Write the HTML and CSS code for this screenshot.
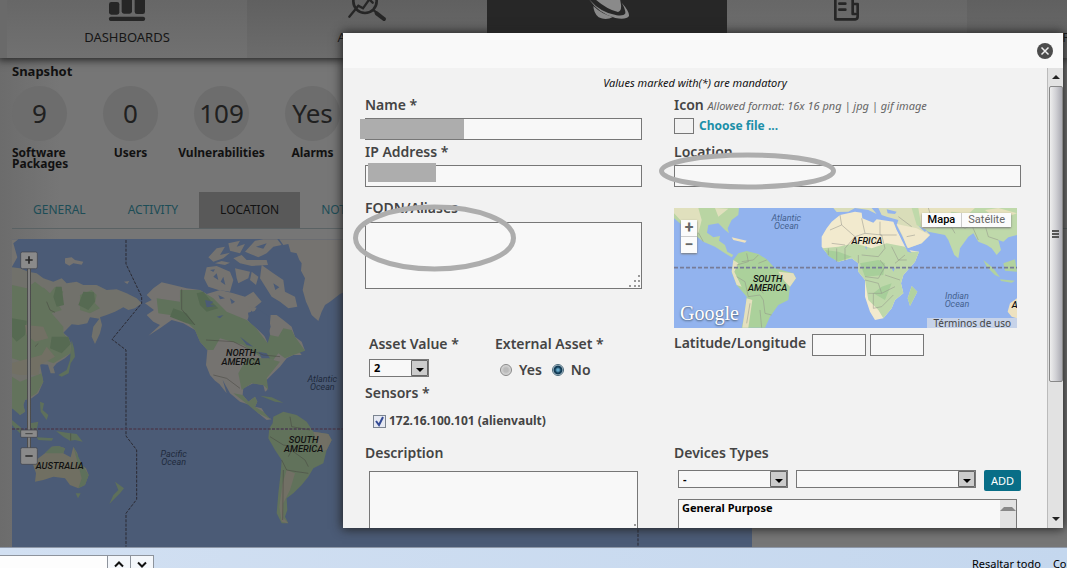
FILE: index.html
```html
<!DOCTYPE html>
<html lang="en">
<head>
<meta charset="utf-8">
<title>Asset detail</title>
<link rel="stylesheet" href="styles.css">
</head>
<body>
<div class="app">
  <nav class="nav">
    <a class="nav-item" href="#dashboards">
      <svg class="nav-icon" viewBox="321 0 120 63"><rect x="327" y="6" width="31" height="38" rx="7"/><rect x="365" y="-30" width="31" height="71" rx="7"/><rect x="404" y="-20" width="31" height="62" rx="7"/><rect x="327" y="50" width="108" height="13" rx="5"/></svg>
      <span>DASHBOARDS</span>
    </a>
    <a class="nav-item nav-item-alt" href="#analysis">
      <svg class="nav-icon" viewBox="21 0 120 63"><g fill="none" stroke="#262626" stroke-linecap="round"><circle cx="75" cy="4" r="35" stroke-width="8"/><path d="M28 50 55 17 69 25 88-2 98 8" stroke-width="7"/><path d="M102 32 111 39" stroke-width="7"/><path d="M110 40 132 57" stroke-width="12"/></g></svg>
      <span>ANALYSIS</span>
    </a>
    <a class="nav-item nav-item-on" href="#environment">
      <svg class="nav-icon" viewBox="741 0 120 63"><path fill="#8a8a8a" d="M752-15H838L843 14Q845 34 834 36 796 28 752-15ZM760 18Q785 42 819 51 798 62 776 52 761 40 760 18Z"/><path fill="#8a8a8a" d="M746-4Q780 38 830 46 851 49 856 40 857 28 845 8 869 35 867 48 859 60 826 54 775 40 746-4Z"/></svg>
      <span>ENVIRONMENT</span>
    </a>
    <a class="nav-item" href="#reports">
      <svg class="nav-icon" viewBox="381 0 120 63"><path fill="none" stroke="#262626" stroke-width="8" d="M406-10V58H466Q473 58 473 49V12H458V-10M458 12V42H466M418 11H436M418 29H436" stroke-linecap="round" stroke-linejoin="round"/></svg>
      <span>REPORTS</span>
    </a>
    <a class="nav-item nav-item-alt" href="#configuration"><span>CONFIGURATION</span></a>
  </nav>
  <main class="asset">
    <h2 class="asset-title">Snapshot</h2>
    <div class="stats">
      <div class="stat"><span class="stat-value">9</span><span class="stat-name stat-name-left">Software<br>Packages</span></div>
      <div class="stat"><span class="stat-value">0</span><span class="stat-name">Users</span></div>
      <div class="stat"><span class="stat-value">109</span><span class="stat-name">Vulnerabilities</span></div>
      <div class="stat"><span class="stat-value">Yes</span><span class="stat-name">Alarms</span></div>
    </div>
    <div class="tabs">
      <a class="tab" href="#general">GENERAL</a>
      <a class="tab" href="#activity">ACTIVITY</a>
      <a class="tab tab-on" href="#location">LOCATION</a>
      <a class="tab" href="#notes">NOTES</a>
    </div>
    <svg class="world" viewBox="0 0 740 309" preserveAspectRatio="xMinYMin slice">
      <defs>
        <linearGradient id="slider" x1="0" x2="1"><stop offset="0" stop-color="#333"/><stop offset=".5" stop-color="#999"/><stop offset="1" stop-color="#333"/></linearGradient>
      </defs>
      <rect width="740" height="309" fill="#4b5b76"/>
      <g transform="translate(-12 -9) scale(.33333)">
        <path fill="#71716b" d="M36 112 60 115 85 125 110 130 130 145 160 155 185 145 200 160 230 155 250 165 290 165 320 180 350 178 380 190 410 205 425 220 405 235 385 240 370 232 345 245 320 255 300 262 306 285 300 310 285 342 275 320 280 290 298 266 270 262 262 280 235 285 215 283 190 308 205 322 215 345 212 370 195 385 170 400 160 412 165 430 152 430 144 404 120 402 125 430 130 455 115 490 95 505 75 510 70 525 75 545 60 555 50 540 36 535Z"/>
        <path fill="#63735c" d="M36 165 80 175 105 155 150 190 165 170 190 185 170 215 185 240 155 250 190 290 190 308 212 340 212 370 160 400 120 385 70 395 36 385ZM240 195 275 180 290 195 285 220 300 235 270 250 240 240ZM36 440 60 455 125 430 130 455 110 490 75 510 70 525 75 545 60 555 36 535ZM130 172 145 185 135 200Z"/>
        <path fill="#566a52" d="M36 265 80 272 75 315 50 335 36 320ZM168 170 185 170 192 225 170 230 160 200ZM250 185 282 187 285 215 265 240 235 225ZM155 320 205 320 212 342 185 370 150 355Z"/>
        <path fill="#727064" d="M75 285 130 290 145 325 105 335 80 315ZM50 395 125 375 140 350 165 380 120 405 115 435 60 435 36 430V400Z"/>
        <g fill="#757370">
          <path d="M195 85 215 82 225 90 250 95 245 104 220 100 208 107 195 100ZM372 155 388 153 382 162ZM40 40 55 28H36V110L52 82Z"/>
          <path d="M838 28 850 45 865 42 872 66 890 70 898 90 905 100 903 122 915 145 908 180 918 215 925 230 935 255 955 273 965 245 975 225 990 215 1020 192 1060 175V28Z"/>
          <path d="M440 195 460 175 485 157 520 165 560 175 600 180 620 192 660 180 700 190 735 200 760 185 785 215 755 240 742 270 765 290 790 310 803 340 812 325 808 300 812 255 830 255 850 270 875 290 885 320 905 335 915 362 890 355 905 375 880 375 860 385 840 410 820 430 800 450 802 480 795 485 790 465 760 460 730 475 728 495 745 515 765 500 772 515 765 530 785 535 800 560 815 568 800 570 775 550 750 525 720 515 690 490 668 450 680 490 658 462 645 452 630 435 618 405 622 360 600 335 585 300 550 280 515 270 480 295 445 317 480 285 460 275 440 255 462 240 435 220 455 210Z"/>
          <path d="M625 82 650 55 675 50 660 75 690 68 670 85 640 95ZM620 112 650 108 690 125 700 150 690 185 655 180 625 170 612 145ZM645 100 665 93 690 98 675 105ZM685 40 720 32 710 50 735 42 720 70 690 62ZM700 85 725 75 740 90 800 90 804 105 755 108 720 100ZM735 65 765 32 790 28H832L845 45 820 50 800 70 775 82ZM785 105 820 130 850 150 855 185 885 200 892 230 865 235 840 215 815 200 780 145ZM705 115 750 125 745 145 715 160 710 145ZM755 125 775 140 768 165 750 150ZM745 230 770 233 760 250Z"/>
          <path fill="#60725b" d="M540 180 600 180 640 205 680 245 740 270 765 290 803 340 810 315 835 320 850 295 875 300 885 320 915 362 880 375 855 385 835 370 820 390 780 380 730 345 660 325 640 360 622 360 600 335 585 300 560 275 510 255 475 250 470 205 540 215Z"/>
          <path fill="#546951" d="M590 190 610 185 635 215 655 235 620 245 600 225ZM520 235 560 250 585 285 560 280 510 260Z"/>
          <path fill="#62725c" d="M740 385 800 385 840 395 800 445 805 480 790 465 755 460 725 480 715 430ZM700 490 728 495 745 515 765 500 772 515 765 530 790 545 812 568 775 550 745 525Z"/>
        </g>
        <path fill="#4b5b76" d="M744 248 778 240 805 258 812 290 800 325 775 300 748 275ZM615 210 640 215 630 225 648 228 620 232ZM650 260 670 255 660 265ZM720 320 760 350 740 345ZM775 365 800 370 810 385 785 385ZM650 130 655 150 640 140ZM670 140 676 165 662 155ZM630 120 645 118 640 126ZM820 160 838 172 826 180ZM768 50 800 40 790 56ZM655 195 675 205 660 208ZM690 205 705 215 695 222Z"/>
        <path fill="#61725b" d="M820 560 850 545 890 555 920 575 940 605 985 612 995 630 980 660 970 700 940 715 925 740 905 765 880 790 860 805 862 840 855 860 865 880 845 880 830 850 835 790 842 730 845 690 825 660 805 625 808 595 818 580Z"/>
        <path fill="#727065" d="M940 605 985 612 995 630 980 660 960 665ZM860 720 885 730 870 780 850 820 850 865 865 880 845 875 838 830 848 760Z"/>
        <path fill="#706f62" d="M98 700 115 685 135 670 155 650 175 648 195 655 190 670 212 682 220 650 232 670 238 700 258 715 266 735 255 765 235 775 210 765 195 745 160 740 130 750 105 755 108 730Z"/>
        <path fill="#5e705b" d="M135 670 155 650 175 648 195 655 190 670 165 670ZM220 650 235 680 250 710 266 735 255 765 235 775 245 745 235 705ZM227 790 242 790 234 805ZM345 755 372 775 360 790 328 822 340 795 355 780ZM168 603 200 608 230 612 248 635 225 630 210 632 190 620ZM90 580 115 575 110 600 95 600ZM36 570 65 595 80 615 60 610 36 585ZM110 622 160 625 155 632 115 630ZM120 515 132 520 128 540 145 555 140 570 122 545ZM215 330 222 355 225 380 212 400 206 430 185 440 175 435 200 420 210 390ZM780 497 815 502 850 518 825 515Z"/>
        <g fill="none" stroke="#45453f" stroke-width="1.5"><path d="M545 178V238L585 285M618 330 700 335 740 355 790 375 840 380M640 435 680 445 720 475M845 690 860 720 890 725 925 730M865 680 880 650 850 645 810 620M880 665 915 690 925 710M850 720 848 870M105 350 115 340M140 215 150 240 165 247M870 560 875 590 930 600M212 610V632"/></g>
        <g fill="none" stroke="#2b2a32" stroke-width="3" stroke-dasharray="9 4"><path d="M378 30V102L425 200V220L336 328 378 360V618L410 660V808L378 850V950"/><path d="M36 597H2230" stroke="#4a3c50" stroke-width="4"/><path d="M1914 600V960"/></g>
        <g class="continent"><text x="723" y="379">NORTH</text><text x="723" y="406">AMERICA</text><text x="911" y="640">SOUTH</text><text x="911" y="667">AMERICA</text><text x="179" y="718">AUSTRALIA</text></g>
        <g class="ocean"><text x="967" y="456">Atlantic</text><text x="967" y="480">Ocean</text><text x="521" y="682">Pacific</text><text x="521" y="705">Ocean</text></g>
        <rect x="81" y="110" width="12" height="545" fill="url(#slider)"/>
        <g fill="#8a8a8a" stroke="#3e4148" stroke-width="2"><rect x="62" y="66" width="50" height="50" rx="5"/><rect x="62" y="600" width="50" height="22" rx="3"/><rect x="62" y="653" width="50" height="50" rx="5"/></g>
        <path stroke="#282828" stroke-width="5" d="M76 90H98M87 79V101M76 678H98"/><path stroke="#444" stroke-width="3" d="M76 611H98"/>
      </g>
    </svg>
  </main>
</div>

<footer class="findbar">
  <input class="find-text" type="text" aria-label="Find in page">
  <button class="find-step" type="button" aria-label="Previous"><svg viewBox="0 0 12 8"><path d="M2 6.500 6 2.500 10 6.500"/></svg></button>
  <button class="find-step" type="button" aria-label="Next"><svg viewBox="0 0 12 8"><path d="M2 2.500 6 6.500 10 2.500"/></svg></button>
  <span class="find-options"><button type="button">Resaltar todo</button><button type="button">Coincidir</button></span>
</footer>

<section class="dialog" role="dialog" aria-label="Edit asset">
  <header class="dialog-head">
    <button class="close" type="button" aria-label="Close"><svg viewBox="0 0 16 16"><circle cx="8" cy="8" r="8" fill="#4c4c4c"/><path d="M4.500 4.500 11.500 11.500M11.500 4.500 4.500 11.500" stroke="#eee" stroke-width="1.500"/></svg></button>
  </header>
  <div class="dialog-main">
    <form class="form">
      <p class="note">Values marked with(*) are mandatory</p>
      <div class="columns">
        <div class="column">
          <div class="field">
            <label class="label" for="name">Name *</label>
            <input class="box" id="name" type="text">
            <span class="mask mask-name"></span>
          </div>
          <div class="field">
            <label class="label" for="ip">IP Address *</label>
            <input class="box" id="ip" type="text">
            <span class="mask mask-ip"></span>
          </div>
          <div class="field field-aliases">
            <label class="label" for="aliases">FQDN/Aliases</label>
            <div class="area"><textarea class="box box-aliases" id="aliases"></textarea>
              <svg class="grip" viewBox="0 0 12 12"><path d="M10 0h2v2h-2zM6 5h2v2H6zM10 5h2v2h-2zM1 10h2v2H1zM6 10h2v2H6zM10 10h2v2h-2z"/></svg></div>
            <svg class="ring ring-aliases" viewBox="0 0 163 68"><ellipse cx="81.500" cy="34" rx="79" ry="31"/></svg>
          </div>
          <div class="asset-row">
            <div class="field field-value">
              <label class="label" for="value">Asset Value *</label>
              <select class="pick pick-value" id="value"><option>2</option></select>
            </div>
            <fieldset class="field">
              <legend class="label">External Asset *</legend>
              <div class="radios"><input type="radio" name="ext" id="yes"><label for="yes">Yes</label><input type="radio" name="ext" id="no" checked><label for="no">No</label></div>
            </fieldset>
          </div>
          <div class="field field-sensors">
            <span class="label">Sensors *</span>
            <div class="sensor"><input type="checkbox" id="sensor" checked><label for="sensor">172.16.100.101 (alienvault)</label></div>
          </div>
          <div class="field field-bottom">
            <label class="label" for="description">Description</label>
            <div class="area area-description"><textarea class="box box-description" id="description"></textarea>
              <svg class="grip" viewBox="0 0 12 12"><path d="M10 0h2v2h-2zM6 5h2v2H6zM10 5h2v2h-2zM1 10h2v2H1zM6 10h2v2H6zM10 10h2v2h-2z"/></svg></div>
          </div>
        </div>

        <div class="column">
          <div class="field field-icon">
            <span class="label">Icon <em class="hint">Allowed format: 16x 16 png | jpg | gif image</em></span>
            <div class="file"><span class="file-preview"></span><a href="#choose">Choose file ...</a></div>
          </div>
          <div class="field">
            <label class="label" for="location">Location</label>
            <input class="box" id="location" type="text">
            <svg class="ring ring-location" viewBox="0 0 179 38"><ellipse cx="89.500" cy="19" rx="86" ry="16"/></svg>
          </div>
          <div class="minimap">
            <svg class="minimap-art" viewBox="0 0 343 120" preserveAspectRatio="xMinYMin slice">
              <rect width="400" height="120" fill="#92b3ee"/>
              <g transform="translate(-9 -8) scale(.33333)">
                <path fill="#b9d5a3" d="M27 24H222L220 45 200 60 188 85 192 100 180 90 160 70 130 75 126 98 145 112 165 108 162 122 180 135 187 155 205 165 200 172 180 160 150 140 115 125 90 105 62 85 27 55Z"/>
                <path fill="#e0e0bd" d="M27 24H100L110 60 100 100 60 75 27 40ZM150 24 190 26 160 50Z"/>
                <path fill="#abd19b" d="M205 180 220 160 245 153 280 162 305 178 330 205 385 220 393 235 375 260 370 300 340 315 315 350 300 383H230L240 340 245 290 215 255 200 215 208 195Z"/>
                <path fill="#e4e0be" d="M340 215 385 220 393 235 375 260 360 245ZM205 180 220 190 208 215 230 260 215 255 200 215ZM245 295 262 300 250 383H232Z"/>
                <path fill="#f2eace" d="M470 110 485 85 500 65 525 45 570 35 590 38 592 55 625 68 635 58 685 65 695 90 715 125 730 150 762 155 750 185 715 225 708 250 715 280 690 300 680 325 655 355 630 360 615 335 600 290 600 240 580 215 580 190 560 175 520 185 490 165 470 140Z"/>
                <path fill="#bed8aa" d="M472 145 520 140 570 130 620 145 665 130 720 140 730 155 762 155 750 185 715 225 708 250 715 280 690 300 680 325 655 355 640 330 610 300 600 240 580 215 580 190 560 175 520 185 490 165Z"/>
                <path fill="#a7cf9a" d="M480 150 520 155 560 170 520 185 490 168ZM585 190 640 180 660 190 655 225 600 230ZM625 280 650 260 680 250 660 300Z"/>
                <path fill="#d9ddb9" d="M505 24H760L772 80 795 105 770 130 728 145 715 115 695 75 700 60 665 50 650 45 640 24 620 24 635 42 610 30 570 24 550 35 515 36Z"/>
                <path fill="#f0e8cb" d="M695 72 755 85 795 105 770 130 728 145 712 105Z"/>
                <path fill="#bfd9aa" d="M740 24H1056V105L1030 112 1015 125 1000 120 1008 150 995 165 980 145 965 135 940 125 925 100 910 110 885 145 880 175 868 165 850 120 840 105 790 95 755 75Z"/>
                <path fill="#e6e1bd" d="M760 24H930L910 42 860 35 815 85 770 85ZM960 30 1000 24 1056 40 1000 60ZM740 258 757 275 735 318 728 295Z"/>
                <path fill="#b2d29f" d="M740 258 757 275 735 318 728 295ZM955 180 985 205 1005 232 990 225 965 200ZM1015 190 1050 178 1056 215 1020 212ZM1005 238 1050 242 1040 248 1008 243Z"/>
                <path fill="#eee2c0" d="M1056 295 1035 310 1028 335 1040 350 1056 355ZM200 112 245 122 240 128 205 120Z"/>
                <path fill="#92b3ee" d="M692 80 700 90 725 140 740 158 728 155 710 120ZM665 28 695 35 690 42 668 40ZM600 140 606 140 604 150ZM680 205 690 205 685 215ZM760 78 785 90 780 96Z"/>
                <g fill="none" stroke="#908f88" stroke-width="1.500"><path d="M525 45 530 75 495 90M530 75 570 110 600 100 590 55M600 100 650 105M645 65V105H695M650 105 660 145 640 170 590 165M570 110 540 145M540 145 540 183M500 130 540 135M490 145V165M515 145V185M580 165 580 190M600 230 640 235 660 200 645 180M600 240 640 250 650 280 610 280M625 280V325L650 320 685 285M650 280 690 260M660 225 705 240M690 190 720 165M680 140 700 180 725 180M230 185 265 180 280 165M245 160 250 185 215 195M280 190 305 180M215 230 240 245 250 290M250 290 285 285 295 300 300 340 320 345M295 280 270 250M285 330 290 383M255 310 245 370M790 24 800 55 850 65 870 100M850 60 900 85 920 75 940 120M960 75 970 110 1000 120M700 50 740 80M100 98 115 125M725 110 750 105"/></g>
                <path stroke="#777c98" stroke-width="5" stroke-dasharray="12 6" d="M27 203H1200"/>
                <g class="continent"><text x="606" y="132">AFRICA</text><text x="308" y="246">SOUTH</text><text x="308" y="273">AMERICA</text><text x="1049" y="325">A</text></g>
                <g class="ocean"><text x="364" y="63">Atlantic</text><text x="364" y="87">Ocean</text><text x="876" y="298">Indian</text><text x="876" y="322">Ocean</text></g>
              </g>
            </svg>
            <div class="zoomer"><button type="button">+</button><button type="button">−</button></div>
            <div class="kinds"><button class="kind-on" type="button">Mapa</button><button type="button">Satélite</button></div>
            <span class="brand">Google</span>
            <a class="terms" href="#terms">Términos de uso</a>
          </div>
          <div class="coords"><label class="label" for="lat">Latitude/Longitude</label><input class="box box-coord" id="lat" type="text"><input class="box box-coord" type="text" aria-label="Longitude"></div>
          <div class="field field-devices">
            <span class="label">Devices Types</span>
            <div class="device-row">
              <select class="pick pick-kind" aria-label="Device type"><option>-</option></select>
              <select class="pick pick-sub" aria-label="Device subtype"><option></option></select>
              <button class="add" type="button">ADD</button>
            </div>
            <div class="device-list">
              <select class="device-options" size="4" aria-label="Selected devices"><option>General Purpose</option></select>
              <span class="device-scroll"></span>
            </div>
          </div>
        </div>
      </div>
    </form>
    <div class="scroll">
      <span class="arrow arrow-up"></span>
      <span class="thumb"><i></i><i></i><i></i></span>
      <span class="arrow arrow-down"></span>
    </div>
  </div>
</section>
</body>
</html>
```
FILE: styles.css
```css
* { box-sizing: border-box; }
body {
  margin: 0;
  height: 100vh;
  display: flex;
  flex-direction: column;
  overflow: hidden;
  position: relative;
  background: #737373;
  color: #111;
  font-family: "Noto Sans", "Open Sans", sans-serif;
  font-size: 12px;
}
button, input, select, textarea { font: inherit; margin: 0; padding: 0; }
a { text-decoration: none; }

/* page behind the dialog */
.app { flex: 1; min-height: 0; overflow: hidden; }
.nav {
  position: relative;
  display: flex;
  height: 58px;
  padding-left: 7px;
  background: #6a6a6a;
  box-shadow: 0 0 8px 2px #222;
}
.nav-item {
  flex: 0 0 240px;
  display: flex;
  flex-direction: column;
  align-items: center;
  justify-content: flex-end;
  gap: 7px;
  padding-bottom: 12px;
  background: linear-gradient(#676767, #717171);
  color: #161616;
  font-size: 13px;
  line-height: 18px;
}
.nav-item-alt { background: linear-gradient(#606060, #6c6c6c); }
.nav-item-on { background: #272727; }
.nav-icon { width: 40px; height: 21px; fill: #262626; overflow: visible; }
.asset { padding: 5px 0 0 12px; background: linear-gradient(90deg, #6c6c6c, #767676 60px); min-height: 100%; }
.asset-title { margin: 0; font-size: 13px; line-height: 16px; }
.stats { display: flex; gap: 36px; padding-top: 7px; height: 113px; }
.stat { width: 55px; display: flex; flex-direction: column; align-items: center; gap: 6px; }
.stat-value {
  width: 55px;
  height: 55px;
  border-radius: 50%;
  background: #6d6d6d;
  color: #202020;
  font: 26px/54px "Noto Sans", sans-serif;
  text-align: center;
  flex: none;
}
.stat-name { font-size: 12px; font-weight: 700; line-height: 11px; white-space: nowrap; }
.stat-name-left { align-self: flex-start; }
.tabs { display: flex; height: 37px; border-bottom: 1px solid #5a6264; }
.tab { padding: 0 21px; color: #1d4d56; line-height: 36px; }
.tab-on { background: #595959; color: #111; }
.world { display: block; width: 740px; max-width: 100%; height: 309px; margin-top: 10px; }
.continent, .ocean { font-family: Roboto, sans-serif; font-style: italic; text-anchor: middle; }
.continent { font-size: 28px; font-weight: 500; fill: #111; }
.ocean { font-size: 27px; fill: #202a3c; }

/* find bar */
.findbar {
  flex: none;
  display: flex;
  align-items: flex-start;
  height: 21px;
  padding-top: 7px;
  border-top: 1px solid #8e98a8;
  background: linear-gradient(90deg, #d2e0f2, #c4d7ee);
  overflow: hidden;
}
.find-text { width: 108px; height: 22px; flex: none; border: 1px solid #8d939c; border-left: 0; background: #fdfdfd; }
.find-step { width: 23px; height: 18px; flex: none; border: 1px solid #8d939c; border-left: 0; background: #f4f7fb; line-height: 0; }
.find-step svg { width: 12px; height: 8px; fill: none; stroke: #111; stroke-width: 2; }
.find-options { display: flex; gap: 12px; margin-left: auto; width: 95px; }
.find-options button { flex: none; border: 0; background: none; font-size: 11px; line-height: 18px; color: #000; }

/* dialog */
.dialog {
  position: absolute;
  inset: 33px 4px 40px 343px;
  display: flex;
  flex-direction: column;
  background: #f2f2f2;
  box-shadow: 0 0 10px 1px #222;
  color: #444;
}
.dialog-head { display: flex; justify-content: flex-end; align-items: center; height: 35px; flex: none; padding-right: 10px; background: #f9f9f9; }
.close { width: 16px; height: 16px; border: 0; background: none; line-height: 0; }
.close svg { width: 16px; height: 16px; }
.dialog-main { flex: 1; min-height: 0; display: flex; }
.form { flex: 1; min-width: 0; overflow: hidden; padding: 7px 26px 0 22px; }
.note { margin: 0; padding-left: 4px; text-align: center; font-size: 11px; font-style: italic; line-height: 16px; color: #111; }
.columns { display: grid; grid-template-columns: 277fr 347fr; gap: 32px; padding-top: 6px; }
.column { display: flex; flex-direction: column; gap: 4px; min-width: 0; }
.field { position: relative; display: flex; flex-direction: column; gap: 5px; margin: 0; padding: 0; border: 0; min-width: 0; }
.label { display: block; padding: 0; font-size: 14px; font-weight: 600; line-height: 16px; height: 16px; white-space: nowrap; }
.hint { font-size: 11px; font-weight: 400; color: #666; }
.box { display: block; width: 100%; height: 22px; border: 1px solid #777; background: #f8f8f8; resize: none; border-radius: 0; }
.mask { position: absolute; background: #adadad; }
.mask-name { left: -5px; top: 22px; width: 104px; height: 20px; }
.mask-ip { left: 3px; top: 19px; width: 68px; height: 19px; }
.field-aliases { margin-top: 9px; gap: 6px; }
.area { position: relative; }
.box-aliases { height: 67px; }
.grip { position: absolute; right: 2px; bottom: 2px; width: 12px; height: 12px; fill: #999; }
.ring { position: absolute; fill: none; stroke: #adadad; stroke-width: 5; pointer-events: none; }
.ring-aliases { left: -12px; top: 4px; width: 163px; height: 68px; }
.ring-location { left: -16px; top: 8px; width: 179px; height: 38px; }
.asset-row { display: flex; padding: 43px 0 0 4px; height: 88px; }
.field-value { width: 126px; gap: 7px; }
.pick {
  appearance: none;
  height: 18px;
  padding: 0 20px 0 4px;
  border: 1px solid #777;
  border-radius: 0;
  background: #f8f8f8 url("data:image/svg+xml,%3Csvg xmlns='http://www.w3.org/2000/svg' width='17' height='16'%3E%3Cpath fill='%23ccc' stroke='%23666' d='M.5.5h16v15H.5z'/%3E%3Cpath d='M5 8h8l-4 4z'/%3E%3C/svg%3E") no-repeat right center;
  color: #000;
  font-weight: 700;
  font-size: 11px;
  line-height: 14px;
}
.pick-value { width: 60px; }
.radios { display: flex; align-items: center; gap: 7px; padding: 9px 0 0 5px; font-size: 14px; font-weight: 600; line-height: 18px; }
.radios input { appearance: none; width: 12px; height: 12px; border: 1px solid #888; border-radius: 50%; background: radial-gradient(#bbb 30%, #eee); }
.radios label + input { margin-left: 3px; }
.radios input:checked { border-color: #496879; background: radial-gradient(circle at 5px 5px, #6ac 0 1px, #123b55 3px 4px, #d9e7ef 5px); }
.field-sensors { gap: 11px; height: 56px; }
.sensor { display: flex; align-items: center; gap: 3px; padding-left: 8px; height: 18px; font-size: 12px; font-weight: 700; line-height: 20px; }
.sensor input { appearance: none; width: 13px; height: 13px; border: 1px solid #7b8490; background: #e6e9f2 url("data:image/svg+xml,%3Csvg xmlns='http://www.w3.org/2000/svg' width='11' height='11'%3E%3Cpath fill='none' stroke='%23334a94' stroke-width='2' d='M2 5l3 4 4-8'/%3E%3C/svg%3E") center; }
.field-bottom { gap: 10px; }
.area-description { margin: 0 4px; }
.box-description { height: 67px; }
.file { display: flex; align-items: center; gap: 5px; height: 16px; font-weight: 700; line-height: 16px; }
.file-preview { width: 20px; height: 16px; border: 1px solid #777; }
.file a { color: #1b8fa8; }
.field-icon { margin-bottom: 6px; }
.minimap { position: relative; margin: 17px 4px 0 0; height: 120px; overflow: hidden; font-family: Roboto, sans-serif; }
.minimap-art { display: block; width: 100%; height: 120px; }
.minimap .ocean { fill: #44618f; }
.minimap button { border: 0; padding: 0; background: #fbfbfb; color: #666; display: block; }
.zoomer { position: absolute; left: 7px; top: 12px; width: 16px; display: grid; gap: 1px; background: #ccc; box-shadow: 0 1px 2px #777; }
.zoomer button { height: 16px; font-size: 16px; font-weight: 700; line-height: 16px; }
.kinds { position: absolute; right: 6px; top: 5px; display: flex; gap: 1px; background: #ccc; box-shadow: 0 1px 2px #777; }
.minimap .kinds button { padding: 0 6px; height: 14px; font-size: 11px; line-height: 14px; }
.minimap .kinds .kind-on { color: #000; font-weight: 500; }
.brand { position: absolute; left: 6px; bottom: 3px; font: 20px/24px "Liberation Serif", serif; color: #fff; text-shadow: 0 1px 2px #456; }
.terms { position: absolute; right: 0; bottom: 0; padding: 0 6px; background: #c7d3e9; color: #444; font: 10px/10px "Noto Sans", sans-serif; }
.coords { display: flex; gap: 4px; padding-top: 2px; }
.coords .label { min-width: 134px; line-height: 18px; }
.box-coord { width: 54px; }
.field-devices { margin-top: 85px; gap: 9px; }
.device-row { display: flex; align-items: flex-start; gap: 8px; padding-left: 4px; }
.pick-kind { width: 110px; }
.pick-sub { flex: 1; min-width: 0; }
.add { width: 37px; height: 21px; border: 0; border-radius: 2px; background: #086e87; color: #fff; font-size: 11px; line-height: 21px; }
.device-list { display: flex; height: 70px; margin: -1px 4px 0; border: 1px solid #777; background: #f8f8f8; }
.device-options { flex: 1; border: 0; background: none; outline: 0; color: #000; font-size: 11px; overflow: hidden; }
.device-options option { padding: 0 3px; line-height: 15px; min-height: 15px; font-weight: 700; }
.device-scroll { width: 16px; background: #e2e2e2; }
.device-scroll::before { content: ""; display: block; margin: 7px auto 0; width: 8px; border: 4px solid transparent; border-top: 0; border-bottom-color: #888; }

/* dialog scrollbar */
.scroll { flex: 0 0 16px; display: flex; flex-direction: column; align-items: center; background: #e2e2e2; border-left: 1px solid #bbb; }
.arrow { flex: 0 0 18px; display: grid; place-content: center; }
.arrow::before { content: ""; border: 4px solid transparent; }
.arrow-up::before { border-top: 0; border-bottom-color: #222; }
.arrow-down::before { border-bottom: 0; border-top-color: #222; }
.thumb { flex: 0 1 296px; margin-bottom: auto; width: 14px; display: flex; flex-direction: column; align-items: center; justify-content: center; gap: 1px; border: 1px solid #888; border-radius: 2px; background: linear-gradient(90deg, #eee, #d0d0d4 50%, #aaaab2); }
.thumb i { width: 7px; height: 2px; background: #555; }
```
